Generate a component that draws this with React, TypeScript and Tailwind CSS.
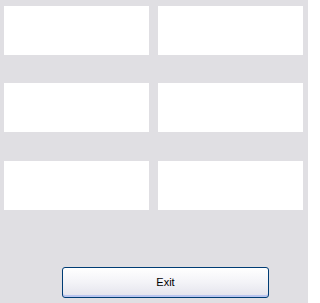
export default function App() {
  const rows = [0, 1, 2]
  return (
    <div className="w-[308px] h-[303px] bg-[#e0dfe3] overflow-hidden flex flex-col" style={{ fontFamily: '"Liberation Sans", Tahoma, sans-serif' }}>
      <div className="pt-[6px] pl-[4px] flex flex-col">
        {rows.map((r) => (
          <div key={r} className={`flex gap-[9px] ${r === 1 ? 'mt-[28px]' : r === 2 ? 'mt-[29px]' : ''}`}>
            <div className="w-[145px] h-[49px] bg-white" />
            <div className="w-[145px] h-[49px] bg-white" />
          </div>
        ))}
      </div>
      <div className="mt-[57px] pl-[62px]">
        <button className="w-[207px] h-[31px] rounded-[3px] border border-[#003c74] bg-gradient-to-b from-white via-[#f3f3f7] to-[#e3e3ec] shadow-[inset_0_-2px_0_#b9c5ef,inset_0_1px_0_#ffffff] text-[11px] text-black flex items-center justify-center pb-[1px]">
          Exit
        </button>
      </div>
    </div>
  )
}
